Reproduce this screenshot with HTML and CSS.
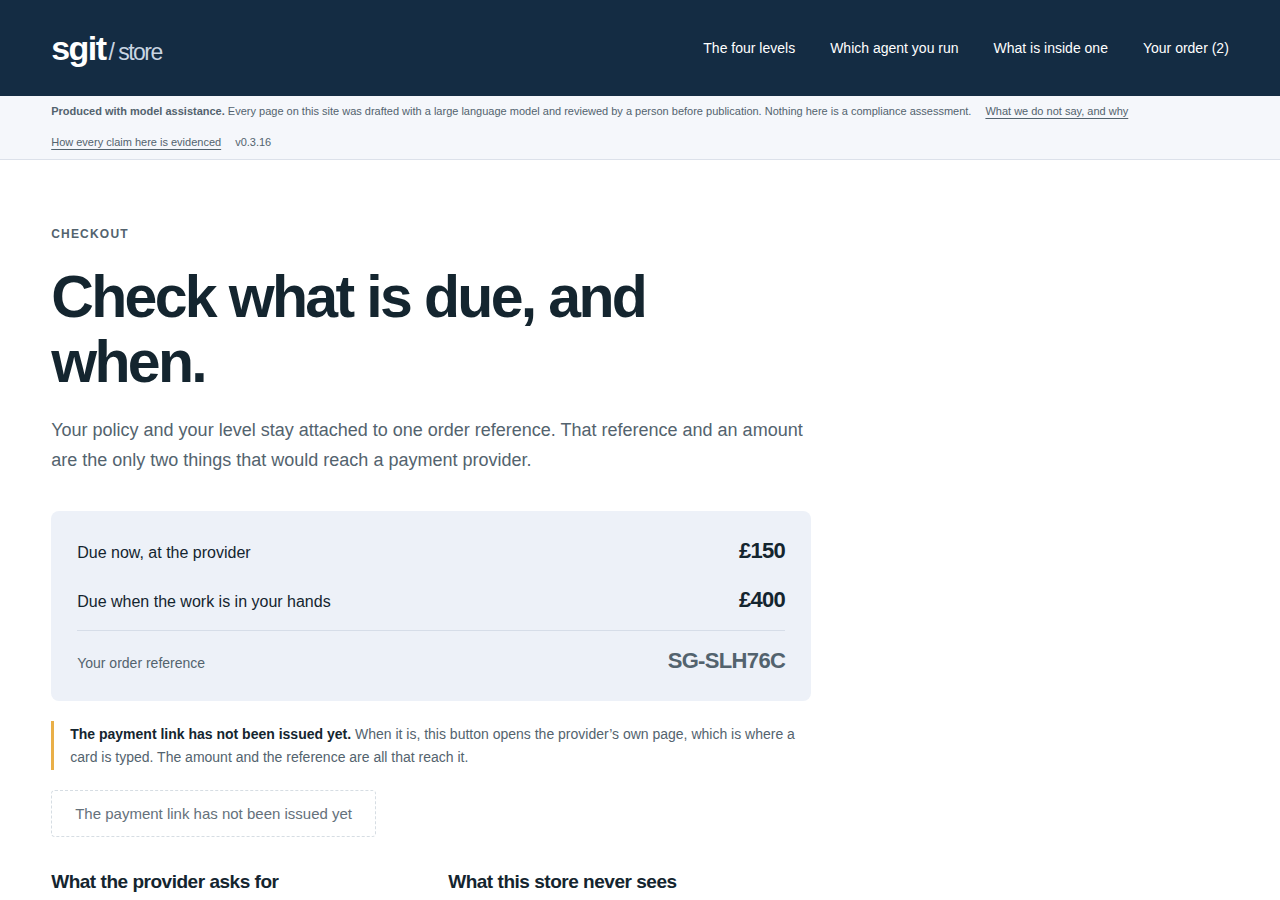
FILE: index.html
```html
<!DOCTYPE html>
<html lang="en">
<head>
<meta charset="utf-8">
<meta name="viewport" content="width=device-width, initial-scale=1">
<title>Checkout – sgit / store</title>
<link rel="stylesheet" href="styles.css">
</head>
<body>
<header class="site-header">
  <a class="brand" href="#">sgit<span class="brand-sub">/ store</span></a>
  <nav class="site-nav" aria-label="Main">
    <a href="#">The four levels</a>
    <a href="#">Which agent you run</a>
    <a href="#">What is inside one</a>
    <a href="#">Your order (2)</a>
  </nav>
</header>
<div class="notice">
  <span><strong>Produced with model assistance.</strong> Every page on this site was drafted with a large language model and reviewed by a person before publication. Nothing here is a compliance assessment.</span>
  <a href="#">What we do not say, and why</a>
  <a href="#">How every claim here is evidenced</a>
  <span>v0.3.16</span>
</div>
<main class="page">
  <p class="eyebrow">Checkout</p>
  <h1 class="title">Check what is due, and when.</h1>
  <p class="lede">Your policy and your level stay attached to one order reference. That reference and an amount are the only two things that would reach a payment provider.</p>
  <dl class="summary">
    <div class="row"><dt>Due now, at the provider</dt><dd>£150</dd></div>
    <div class="row"><dt>Due when the work is in your hands</dt><dd>£400</dd></div>
    <div class="row row-ref"><dt>Your order reference</dt><dd>SG-SLH76C</dd></div>
  </dl>
  <p class="callout"><strong>The payment link has not been issued yet.</strong> When it is, this button opens the provider’s own page, which is where a card is typed. The amount and the reference are all that reach it.</p>
  <button class="pay" type="button" disabled>The payment link has not been issued yet</button>
  <div class="columns">
    <h2>What the provider asks for</h2>
    <h2>What this store never sees</h2>
  </div>
</main>
</body>
</html>
```
FILE: styles.css
```css
* { box-sizing: border-box; }
body {
  margin: 0;
  background: #fff;
  color: #14252f;
  font: 16px/1.6 "Liberation Sans", Arial, sans-serif;
}
h1, h2, p, dl, dd { margin: 0; }
.site-header {
  display: flex;
  align-items: center;
  justify-content: space-between;
  min-height: 96px;
  padding: 0 4%;
  background: #142c43;
}
.site-header a { color: #fff; text-decoration: none; }
.site-header .brand {
  font-size: 34px;
  font-weight: 700;
  letter-spacing: -0.045em;
}
.site-header .brand-sub {
  margin-left: 3px;
  color: #c9d5e2;
  font-size: 23px;
  font-weight: 400;
}
.site-nav { display: flex; gap: 35px; font-size: 14px; }
.notice {
  display: flex;
  flex-wrap: wrap;
  gap: 13px 14px;
  padding: 6px 4% 8px;
  border-bottom: 1px solid #dce1ea;
  background: #f5f7fb;
  color: #53636e;
  font-size: 11px;
  line-height: 18px;
}
.notice a {
  color: inherit;
  text-decoration: underline;
  text-underline-offset: 3px;
}
.page { padding: 64px 4% 0; }
.eyebrow {
  color: #53636e;
  font-size: 12px;
  font-weight: 700;
  line-height: 20px;
  letter-spacing: 0.1em;
  text-transform: uppercase;
}
.title {
  max-width: 660px;
  margin-top: 21px;
  font-size: 59px;
  line-height: 65px;
  letter-spacing: -0.045em;
}
.lede {
  max-width: 760px;
  margin-top: 20px;
  color: #53636e;
  font-size: 18px;
  line-height: 30px;
}
.summary {
  max-width: 760px;
  margin-top: 36px;
  padding: 15px 26px;
  border-radius: 8px;
  background: #edf1f8;
}
.row {
  display: flex;
  align-items: baseline;
  justify-content: space-between;
  padding: 7px 0;
}
.row dd {
  font-size: 22px;
  font-weight: 700;
  letter-spacing: -0.03em;
}
.row-ref {
  margin-top: 6px;
  padding-top: 12px;
  border-top: 1px solid #d6dde8;
  color: #53636e;
}
.row-ref dt { font-size: 14px; }
.callout {
  max-width: 760px;
  margin-top: 20px;
  padding: 2px 0 1px 16px;
  border-left: 3px solid #e9af48;
  color: #53636e;
  font-size: 14px;
  line-height: 23px;
}
.callout strong { color: #14252f; }
.pay {
  margin-top: 20px;
  padding: 11px 23px;
  border: 1px dashed #d6dde3;
  border-radius: 4px;
  background: #fff;
  color: #65717b;
  font: 15px/23px "Liberation Sans", Arial, sans-serif;
}
.columns {
  display: grid;
  grid-template-columns: 1fr 1fr;
  gap: 34px;
  max-width: 760px;
  margin-top: 30px;
}
.columns h2 { font-size: 19px; line-height: 30px; letter-spacing: -0.025em; }
```
